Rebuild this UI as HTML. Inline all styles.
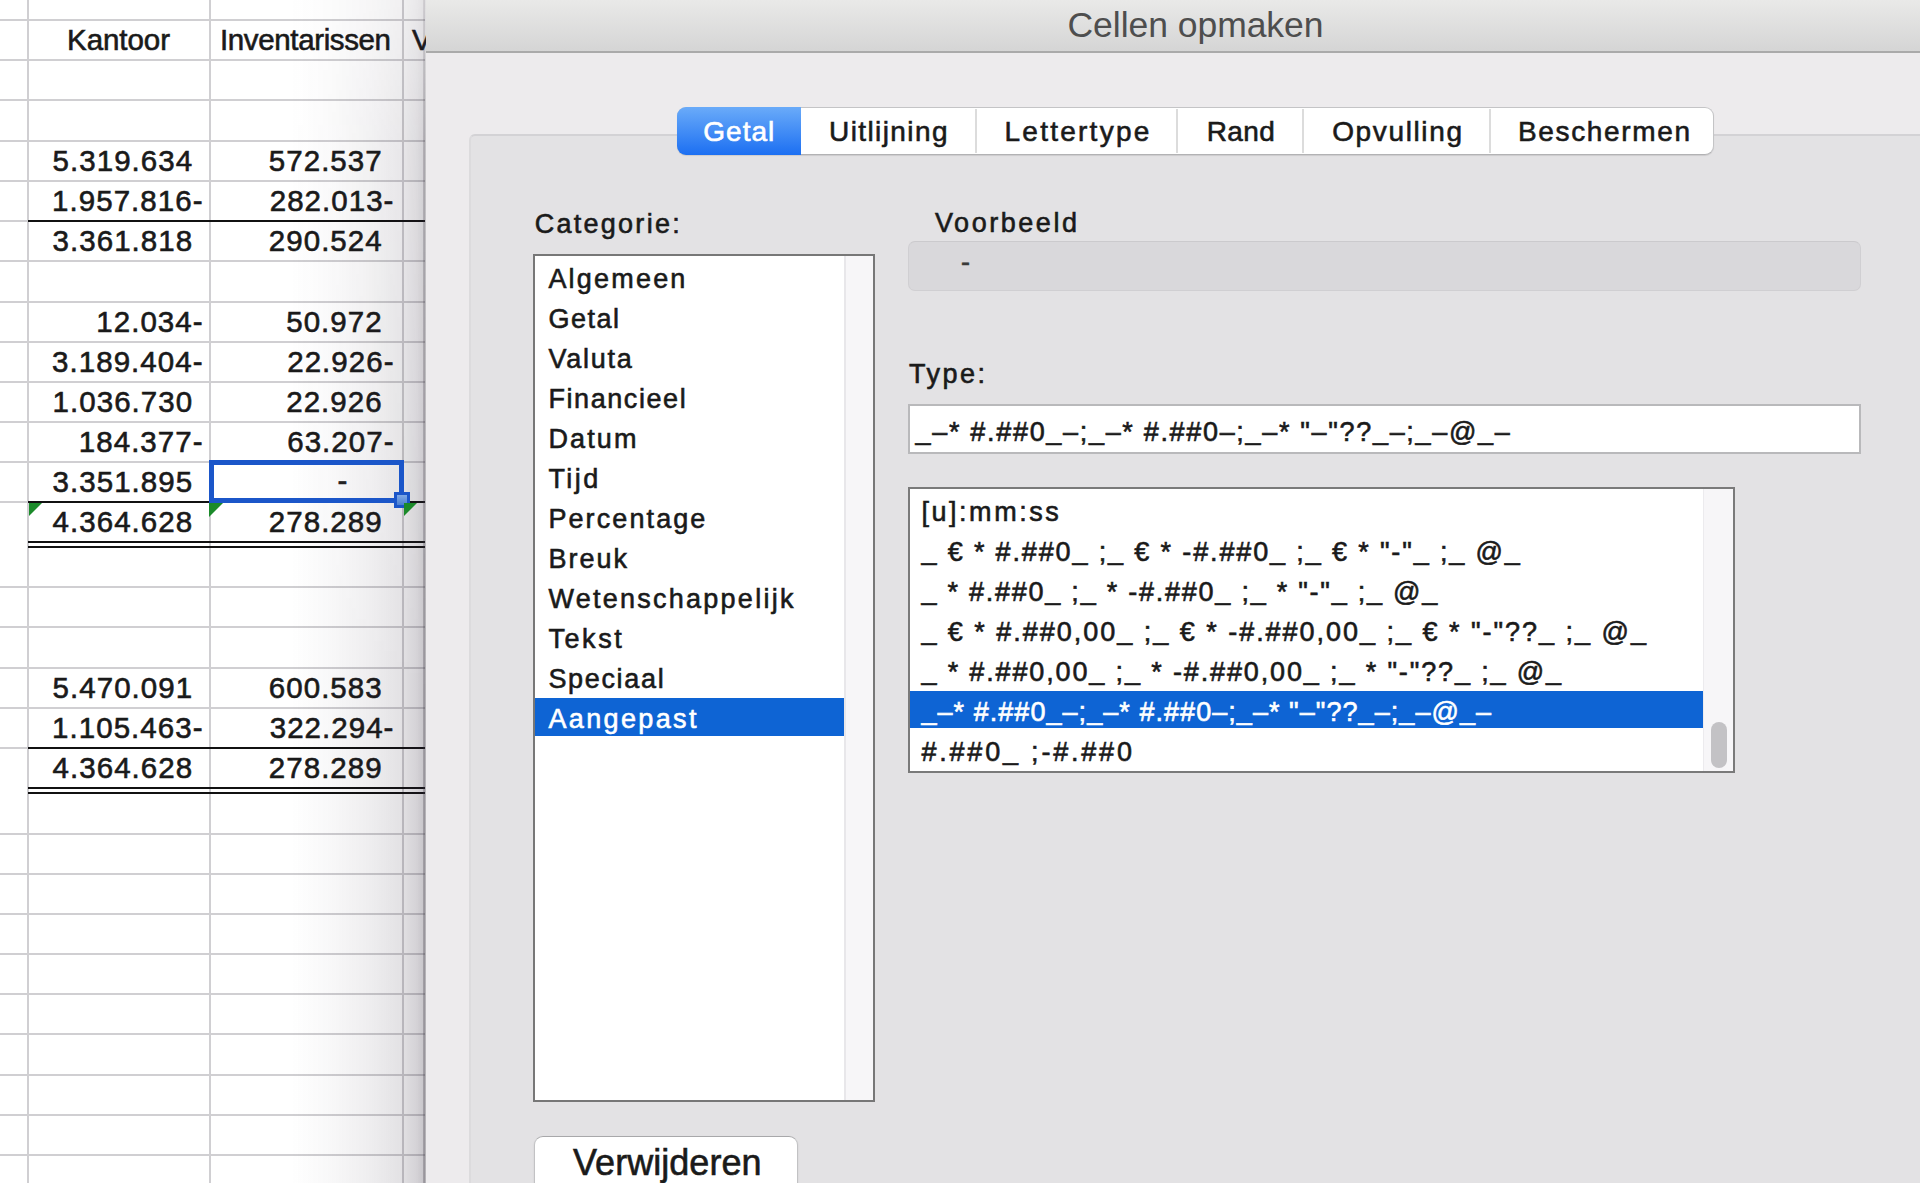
<!DOCTYPE html>
<html><head><meta charset="utf-8">
<style>
*{margin:0;padding:0;box-sizing:border-box}
html,body{width:1920px;height:1183px;overflow:hidden;background:#fff;font-family:"Liberation Sans",sans-serif}
.a{position:absolute}
.t{position:absolute;white-space:pre;line-height:normal;font-family:"Liberation Sans",sans-serif;-webkit-text-stroke:0.6px currentColor}
.hl{position:absolute;left:0;width:425px;height:2px;background:#d0cfd2}
.vl{position:absolute;top:0;width:2px;height:1183px;background:#d0cfd2}
.bk{position:absolute;left:28px;width:397px;height:2px;background:#111}
.u{position:relative;top:-2px}
.nt{-webkit-text-stroke:0}
</style></head><body>
<!-- spreadsheet -->
<div class="a" style="left:0;top:0;width:425px;height:1183px;background:#fff"></div>
<div class="hl" style="top:19.0px"></div>
<div class="hl" style="top:59.0px"></div>
<div class="hl" style="top:99.0px"></div>
<div class="hl" style="top:139.5px"></div>
<div class="hl" style="top:180.0px"></div>
<div class="hl" style="top:220.0px"></div>
<div class="hl" style="top:260.0px"></div>
<div class="hl" style="top:301.0px"></div>
<div class="hl" style="top:341.0px"></div>
<div class="hl" style="top:381.0px"></div>
<div class="hl" style="top:421.0px"></div>
<div class="hl" style="top:461.0px"></div>
<div class="hl" style="top:501.0px"></div>
<div class="hl" style="top:586.0px"></div>
<div class="hl" style="top:626.0px"></div>
<div class="hl" style="top:667.0px"></div>
<div class="hl" style="top:707.0px"></div>
<div class="hl" style="top:747.0px"></div>
<div class="hl" style="top:832.5px"></div>
<div class="hl" style="top:872.5px"></div>
<div class="hl" style="top:913.0px"></div>
<div class="hl" style="top:953.0px"></div>
<div class="hl" style="top:993.0px"></div>
<div class="hl" style="top:1033.0px"></div>
<div class="hl" style="top:1073.5px"></div>
<div class="hl" style="top:1113.7px"></div>
<div class="hl" style="top:1153.7px"></div>
<div class="vl" style="left:27px"></div>
<div class="vl" style="left:209px"></div>
<div class="vl" style="left:402px"></div>
<div class="bk" style="top:220px"></div>
<div class="bk" style="top:501px"></div>
<div class="bk" style="top:747px"></div>
<div class="bk" style="top:541px"></div>
<div class="bk" style="top:546px"></div>
<div class="bk" style="top:787px"></div>
<div class="bk" style="top:792px"></div>
<div class="t" style="left:67.0px;top:23.3px;font-size:29.5px;letter-spacing:-0.05px;color:#1a1a1a">Kantoor</div>
<div class="t" style="left:220.0px;top:23.3px;font-size:29.5px;letter-spacing:-0.37px;color:#1a1a1a">Inventarissen</div>
<div class="t" style="left:412.0px;top:23.3px;font-size:29.5px;letter-spacing:0.00px;color:#1a1a1a">V</div>
<div class="t" style="left:52.6px;top:143.6px;font-size:29.5px;letter-spacing:1.04px;color:#1a1a1a">5.319.634</div>
<div class="t" style="left:268.8px;top:143.6px;font-size:29.5px;letter-spacing:1.04px;color:#1a1a1a">572.537</div>
<div class="t" style="left:52.1px;top:184.1px;font-size:29.5px;letter-spacing:1.04px;color:#1a1a1a">1.957.816-</div>
<div class="t" style="left:269.7px;top:184.1px;font-size:29.5px;letter-spacing:1.04px;color:#1a1a1a">282.013-</div>
<div class="t" style="left:52.6px;top:224.1px;font-size:29.5px;letter-spacing:1.04px;color:#1a1a1a">3.361.818</div>
<div class="t" style="left:268.8px;top:224.1px;font-size:29.5px;letter-spacing:1.04px;color:#1a1a1a">290.524</div>
<div class="t" style="left:96.3px;top:305.1px;font-size:29.5px;letter-spacing:1.04px;color:#1a1a1a">12.034-</div>
<div class="t" style="left:286.2px;top:305.1px;font-size:29.5px;letter-spacing:1.04px;color:#1a1a1a">50.972</div>
<div class="t" style="left:52.1px;top:345.1px;font-size:29.5px;letter-spacing:1.04px;color:#1a1a1a">3.189.404-</div>
<div class="t" style="left:287.2px;top:345.1px;font-size:29.5px;letter-spacing:1.04px;color:#1a1a1a">22.926-</div>
<div class="t" style="left:52.6px;top:385.1px;font-size:29.5px;letter-spacing:1.04px;color:#1a1a1a">1.036.730</div>
<div class="t" style="left:286.2px;top:385.1px;font-size:29.5px;letter-spacing:1.04px;color:#1a1a1a">22.926</div>
<div class="t" style="left:78.8px;top:425.1px;font-size:29.5px;letter-spacing:1.04px;color:#1a1a1a">184.377-</div>
<div class="t" style="left:287.2px;top:425.1px;font-size:29.5px;letter-spacing:1.04px;color:#1a1a1a">63.207-</div>
<div class="t" style="left:52.6px;top:465.1px;font-size:29.5px;letter-spacing:1.04px;color:#1a1a1a">3.351.895</div>
<div class="t" style="left:337.6px;top:464.1px;font-size:29.5px;letter-spacing:0.00px;color:#222">-</div>
<div class="t" style="left:52.6px;top:505.1px;font-size:29.5px;letter-spacing:1.04px;color:#1a1a1a">4.364.628</div>
<div class="t" style="left:268.8px;top:505.1px;font-size:29.5px;letter-spacing:1.04px;color:#1a1a1a">278.289</div>
<div class="t" style="left:52.6px;top:671.1px;font-size:29.5px;letter-spacing:1.04px;color:#1a1a1a">5.470.091</div>
<div class="t" style="left:268.8px;top:671.1px;font-size:29.5px;letter-spacing:1.04px;color:#1a1a1a">600.583</div>
<div class="t" style="left:52.1px;top:711.1px;font-size:29.5px;letter-spacing:1.04px;color:#1a1a1a">1.105.463-</div>
<div class="t" style="left:269.7px;top:711.1px;font-size:29.5px;letter-spacing:1.04px;color:#1a1a1a">322.294-</div>
<div class="t" style="left:52.6px;top:751.1px;font-size:29.5px;letter-spacing:1.04px;color:#1a1a1a">4.364.628</div>
<div class="t" style="left:268.8px;top:751.1px;font-size:29.5px;letter-spacing:1.04px;color:#1a1a1a">278.289</div>
<!-- shadow -->
<div class="a" style="left:290px;top:0;width:135px;height:1183px;background:linear-gradient(to right,rgba(40,30,50,0) 0%,rgba(40,30,50,0.03) 30%,rgba(40,30,50,0.08) 60%,rgba(40,30,50,0.13) 82%,rgba(40,30,50,0.2) 94%,rgba(40,30,50,0.27) 100%);-webkit-mask-image:linear-gradient(to bottom,rgba(0,0,0,0.5) 0px,rgba(0,0,0,0.8) 150px,#000 700px)"></div>
<!-- selected cell -->
<div class="a" style="left:209px;top:460px;width:195px;height:43px;border:5px solid #1b56c9"></div>
<div class="a" style="left:394px;top:492px;width:16px;height:16px;background:linear-gradient(#7fa9e6,#4a7fd0);border:3px solid #1b56c9"></div>
<!-- green triangles -->
<div class="a" style="left:209px;top:503px;width:0;height:0;border-top:14px solid #1b8a2a;border-right:14px solid transparent"></div>
<div class="a" style="left:29px;top:503px;width:0;height:0;border-top:13px solid #1b8a2a;border-right:13px solid transparent"></div>
<div class="a" style="left:404px;top:503px;width:0;height:0;border-top:13px solid #1b8a2a;border-right:13px solid transparent"></div>

<!-- dialog -->
<div class="a" style="left:423px;top:0;width:3px;height:1183px;background:linear-gradient(to right,rgba(60,55,65,0.25),rgba(60,55,65,0.4));-webkit-mask-image:linear-gradient(to bottom,rgba(0,0,0,0.4) 0px,rgba(0,0,0,0.8) 150px,#000 700px)"></div>
<div class="a" style="left:426px;top:0;width:1494px;height:1183px;background:#edebed"></div>
<div class="a" style="left:426px;top:0;width:1494px;height:53px;background:linear-gradient(#e9e9e8,#d5d5d5);border-bottom:2px solid #aaaaaa"></div>
<!-- inner box -->
<div class="a" style="left:469px;top:134px;width:1500px;height:1100px;background:#e3e2e4;border:2px solid #dcdbdd;border-top-color:#d3d2d5;border-radius:6px"></div>
<!-- tabs -->
<div class="a" style="left:677px;top:107px;width:1037px;height:48px;background:#fff;border:1.5px solid #c4c4c6;border-bottom-color:#b2b2b4;border-radius:9px;box-shadow:0 1px 1px rgba(0,0,0,0.1)"></div>
<div class="a" style="left:677px;top:107px;width:124px;height:48px;background:linear-gradient(#6aabf9,#1c6ff2);border-radius:9px 0 0 9px"></div>
<div class="a" style="left:975px;top:109px;width:2px;height:44px;background:#dcdcdc"></div>
<div class="a" style="left:1176px;top:109px;width:2px;height:44px;background:#dcdcdc"></div>
<div class="a" style="left:1302px;top:109px;width:2px;height:44px;background:#dcdcdc"></div>
<div class="a" style="left:1489px;top:109px;width:2px;height:44px;background:#dcdcdc"></div>
<!-- category list -->
<div class="a" style="left:533px;top:254px;width:342px;height:848px;background:#fff;border:2px solid #777"></div>
<div class="a" style="left:844px;top:256px;width:29px;height:844px;background:#f7f6f8;border-left:2px solid #e8e7ea"></div>
<div class="a" style="left:535px;top:698px;width:309px;height:38px;background:#0e64d4"></div>
<!-- preview -->
<div class="a" style="left:908px;top:241px;width:953px;height:50px;background:#d9d8db;border:1.5px solid #d0cfd2;border-top-color:#cbcacd;border-radius:7px"></div>
<!-- type input -->
<div class="a" style="left:908px;top:404px;width:953px;height:50px;background:#fff;border:2px solid #b9b9bb"></div>
<!-- format list -->
<div class="a" style="left:908px;top:487px;width:827px;height:286px;background:#fff;border:2px solid #7a7a7a"></div>
<div class="a" style="left:1703px;top:489px;width:30px;height:282px;background:#f7f6f8;border-left:1px solid #ecebee"></div>
<div class="a" style="left:910px;top:691px;width:793px;height:37px;background:#0e64d4"></div>
<div class="a" style="left:1711px;top:722px;width:16px;height:46px;background:#c3c2c5;border-radius:8px"></div>
<!-- button -->
<div class="a" style="left:534px;top:1136px;width:264px;height:80px;background:#fff;border:1.5px solid #c2c2c4;border-top-color:#a8a8aa;border-radius:9px;box-shadow:0 1px 2px rgba(0,0,0,0.1)"></div>
<div class="t nt" style="left:1067.5px;top:4.6px;font-size:35.5px;letter-spacing:-0.04px;color:#4e4e4e">Cellen opmaken</div>
<div class="t" style="left:703.3px;top:116.4px;font-size:28px;letter-spacing:0.99px;color:#fff">Getal</div>
<div class="t" style="left:829.0px;top:116.4px;font-size:28px;letter-spacing:1.41px;color:#1a1a1a">Uitlijning</div>
<div class="t" style="left:1004.5px;top:116.4px;font-size:28px;letter-spacing:2.25px;color:#1a1a1a">Lettertype</div>
<div class="t" style="left:1206.8px;top:116.4px;font-size:28px;letter-spacing:0.35px;color:#1a1a1a">Rand</div>
<div class="t" style="left:1332.2px;top:116.4px;font-size:28px;letter-spacing:1.63px;color:#1a1a1a">Opvulling</div>
<div class="t" style="left:1518.0px;top:116.4px;font-size:28px;letter-spacing:1.65px;color:#1a1a1a">Beschermen</div>
<div class="t" style="left:534.7px;top:208.9px;font-size:27px;letter-spacing:2.27px;color:#1a1a1a">Categorie:</div>
<div class="t" style="left:935.0px;top:208.2px;font-size:27px;letter-spacing:2.55px;color:#1a1a1a">Voorbeeld</div>
<div class="t" style="left:909.0px;top:358.6px;font-size:27px;letter-spacing:2.49px;color:#1a1a1a">Type:</div>
<div class="t" style="left:548.4px;top:264.1px;font-size:27px;letter-spacing:2.20px;color:#1a1a1a">Algemeen</div>
<div class="t" style="left:548.4px;top:304.1px;font-size:27px;letter-spacing:1.49px;color:#1a1a1a">Getal</div>
<div class="t" style="left:548.4px;top:344.1px;font-size:27px;letter-spacing:1.75px;color:#1a1a1a">Valuta</div>
<div class="t" style="left:548.4px;top:384.1px;font-size:27px;letter-spacing:1.58px;color:#1a1a1a">Financieel</div>
<div class="t" style="left:548.4px;top:424.1px;font-size:27px;letter-spacing:2.12px;color:#1a1a1a">Datum</div>
<div class="t" style="left:548.4px;top:464.1px;font-size:27px;letter-spacing:2.43px;color:#1a1a1a">Tijd</div>
<div class="t" style="left:548.4px;top:504.1px;font-size:27px;letter-spacing:2.10px;color:#1a1a1a">Percentage</div>
<div class="t" style="left:548.4px;top:544.1px;font-size:27px;letter-spacing:2.01px;color:#1a1a1a">Breuk</div>
<div class="t" style="left:548.4px;top:584.1px;font-size:27px;letter-spacing:2.26px;color:#1a1a1a">Wetenschappelijk</div>
<div class="t" style="left:548.4px;top:624.1px;font-size:27px;letter-spacing:2.59px;color:#1a1a1a">Tekst</div>
<div class="t" style="left:548.4px;top:664.1px;font-size:27px;letter-spacing:1.67px;color:#1a1a1a">Speciaal</div>
<div class="t" style="left:548.4px;top:704.1px;font-size:27px;letter-spacing:2.36px;color:#fff">Aangepast</div>
<div class="t" style="left:921.4px;top:497.3px;font-size:27px;letter-spacing:2.55px;color:#1a1a1a">[u]:mm:ss</div>
<div class="t" style="left:921.4px;top:537.3px;font-size:27px;letter-spacing:1.86px;color:#1a1a1a"><span class="u">_</span> € * #.##0<span class="u">_</span> ;<span class="u">_</span> € * -#.##0<span class="u">_</span> ;<span class="u">_</span> € * "-"<span class="u">_</span> ;<span class="u">_</span> @<span class="u">_</span></div>
<div class="t" style="left:921.4px;top:577.3px;font-size:27px;letter-spacing:1.76px;color:#1a1a1a"><span class="u">_</span> * #.##0<span class="u">_</span> ;<span class="u">_</span> * -#.##0<span class="u">_</span> ;<span class="u">_</span> * "-"<span class="u">_</span> ;<span class="u">_</span> @<span class="u">_</span></div>
<div class="t" style="left:921.4px;top:617.3px;font-size:27px;letter-spacing:1.98px;color:#1a1a1a"><span class="u">_</span> € * #.##0,00<span class="u">_</span> ;<span class="u">_</span> € * -#.##0,00<span class="u">_</span> ;<span class="u">_</span> € * "-"??<span class="u">_</span> ;<span class="u">_</span> @<span class="u">_</span></div>
<div class="t" style="left:921.4px;top:657.3px;font-size:27px;letter-spacing:1.86px;color:#1a1a1a"><span class="u">_</span> * #.##0,00<span class="u">_</span> ;<span class="u">_</span> * -#.##0,00<span class="u">_</span> ;<span class="u">_</span> * "-"??<span class="u">_</span> ;<span class="u">_</span> @<span class="u">_</span></div>
<div class="t" style="left:921.4px;top:697.3px;font-size:27px;letter-spacing:1.05px;color:#fff"><span class="u">_</span>–* #.##0<span class="u">_</span>–;<span class="u">_</span>–* #.##0–;<span class="u">_</span>–* "–"??<span class="u">_</span>–;<span class="u">_</span>–@<span class="u">_</span>–</div>
<div class="t" style="left:921.4px;top:737.3px;font-size:27px;letter-spacing:2.80px;color:#1a1a1a">#.##0<span class="u">_</span> ;-#.##0</div>
<div class="t" style="left:915.6px;top:416.6px;font-size:27px;letter-spacing:1.68px;color:#1a1a1a"><span class="u">_</span>–* #.##0<span class="u">_</span>–;<span class="u">_</span>–* #.##0–;<span class="u">_</span>–* "–"??<span class="u">_</span>–;<span class="u">_</span>–@<span class="u">_</span>–</div>
<div class="t" style="left:961.0px;top:246.6px;font-size:27px;letter-spacing:0.00px;color:#3a3a3a">-</div>
<div class="t" style="left:573.0px;top:1141.8px;font-size:36px;letter-spacing:0.04px;color:#1a1a1a">Verwijderen</div>
</body></html>
